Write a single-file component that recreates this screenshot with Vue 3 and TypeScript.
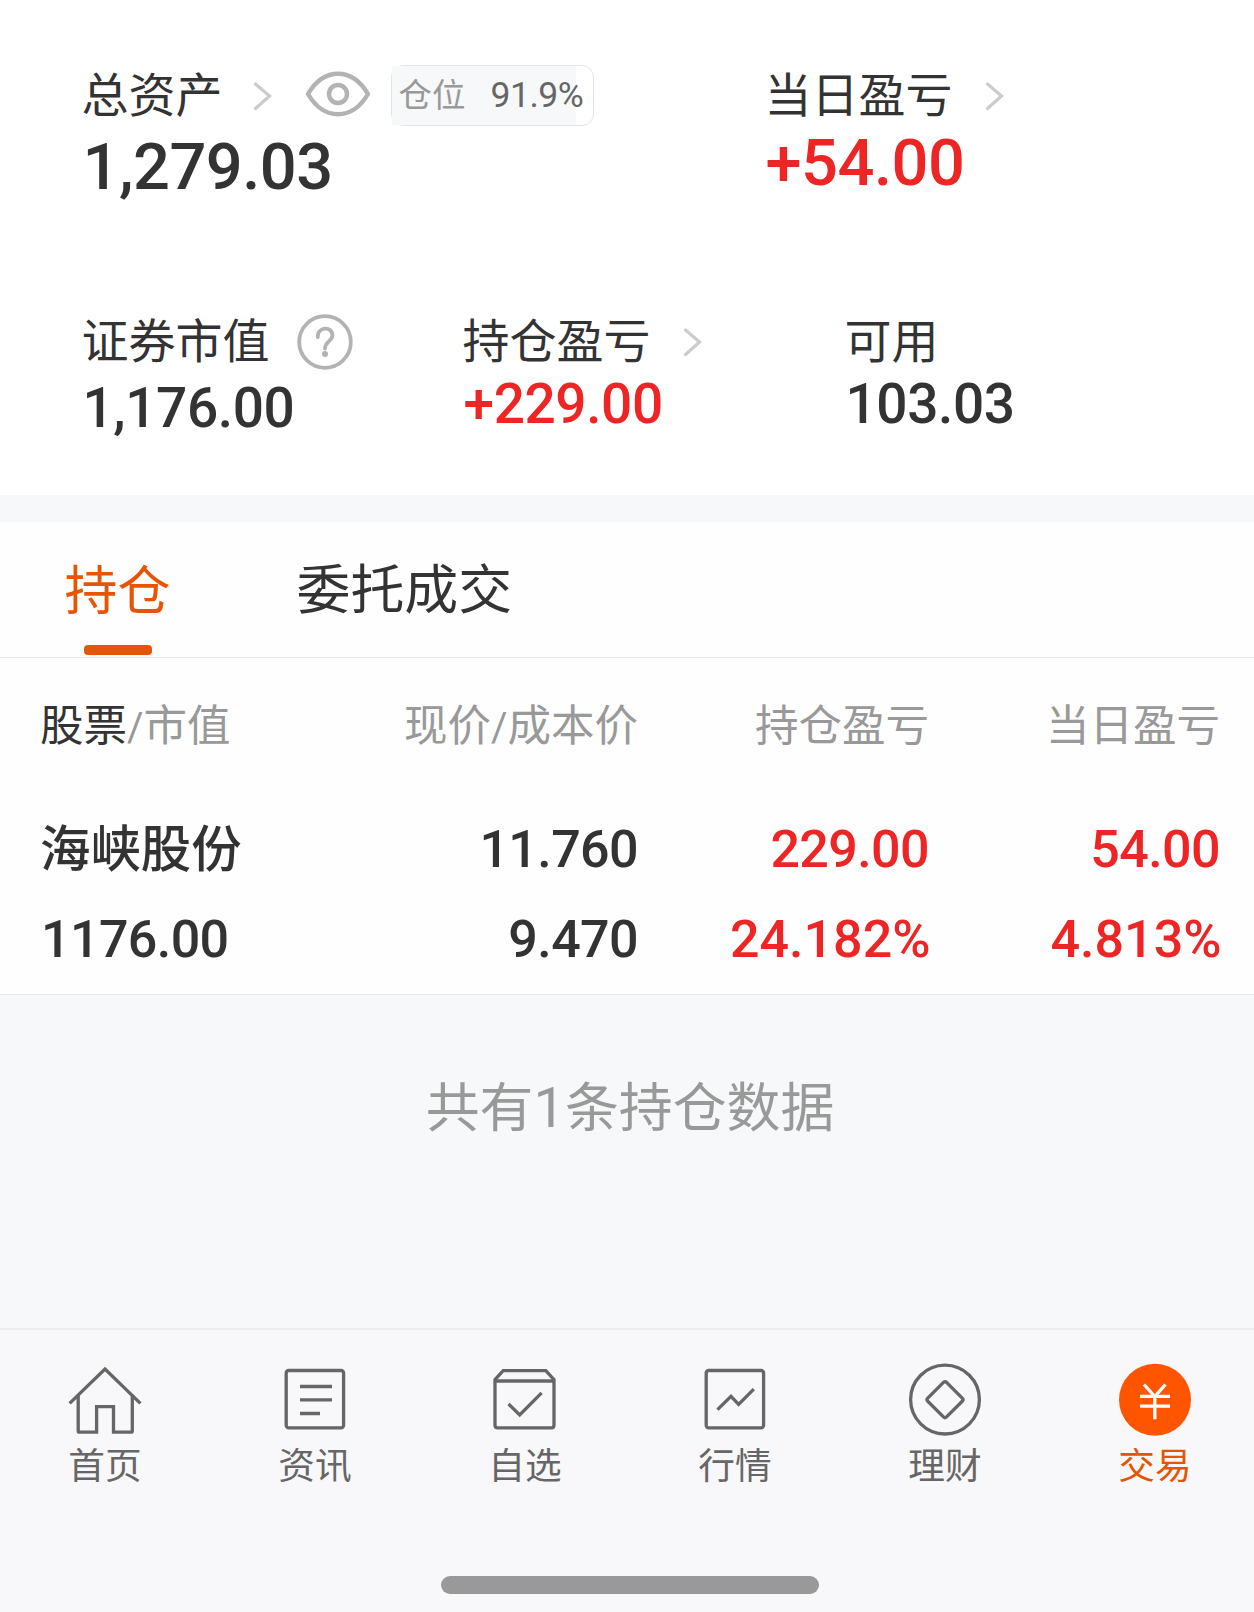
<script setup lang="ts">
interface Holding {
  name: string
  marketValue: string
  price: string
  cost: string
  profit: string
  profitRate: string
  dayProfit: string
  dayRate: string
}

interface NavItem {
  id: string
  label: string
}

const holdings: Holding[] = [
  {
    name: '海峡股份',
    marketValue: '1176.00',
    price: '11.760',
    cost: '9.470',
    profit: '229.00',
    profitRate: '24.182%',
    dayProfit: '54.00',
    dayRate: '4.813%',
  },
]

const navItems: NavItem[] = [
  { id: 'home', label: '首页' },
  { id: 'news', label: '资讯' },
  { id: 'watch', label: '自选' },
  { id: 'market', label: '行情' },
  { id: 'wealth', label: '理财' },
  { id: 'trade', label: '交易' },
]

const activeNav = 'trade'
</script>

<template>
  <div class="page">
    <section class="summary">
      <div class="row row-top">
        <div class="cell cell-total">
          <div class="label">
            <span class="label-text">总资产</span>
            <svg class="chevron chev-total" viewBox="0 0 20 30"><path d="M2.5 3 L16.5 15 L2.5 27.5" /></svg>
            <svg class="eye" viewBox="0 0 66 46">
              <path d="M3 23 C19 -4 47 -4 63 23 C47 50 19 50 3 23 Z" />
              <circle cx="33" cy="23" r="9" />
            </svg>
            <span class="pill"><span class="pill-bg"><span class="pill-name">仓位</span><span class="pill-num">91.9%</span></span></span>
          </div>
          <div class="value big">1,279.03</div>
        </div>
        <div class="cell">
          <div class="label">
            <span class="label-text">当日盈亏</span>
            <svg class="chevron" viewBox="0 0 20 30"><path d="M2.5 3 L16.5 15 L2.5 27.5" /></svg>
          </div>
          <div class="value big up">+54.00</div>
        </div>
      </div>
      <div class="row row-bottom">
        <div class="cell cell-market">
          <div class="label">
            <span class="label-text">证券市值</span>
            <svg class="help" viewBox="0 0 56 56">
              <circle cx="28" cy="28" r="25.8" />
              <path d="M20.8 23 C20.6 12 35.6 12 35.4 21.5 C35.3 27 28 27.5 28 34.5" />
              <circle class="dot" cx="28" cy="40" r="3" />
            </svg>
          </div>
          <div class="value">1,176.00</div>
        </div>
        <div class="cell cell-profit">
          <div class="label">
            <span class="label-text">持仓盈亏</span>
            <svg class="chevron" viewBox="0 0 20 30"><path d="M2.5 3 L16.5 15 L2.5 27.5" /></svg>
          </div>
          <div class="value up">+229.00</div>
        </div>
        <div class="cell">
          <div class="label"><span class="label-text">可用</span></div>
          <div class="value raised">103.03</div>
        </div>
      </div>
    </section>

    <div class="band"></div>

    <div class="tabs">
      <div class="tab active"><span>持仓</span><i class="bar"></i></div>
      <div class="tab"><span>委托成交</span></div>
    </div>

    <section class="table">
      <div class="grid head">
        <span class="first"><b>股票</b><i class="slash">/</i>市值</span>
        <span>现价<i class="slash">/</i>成本价</span>
        <span>持仓盈亏</span>
        <span>当日盈亏</span>
      </div>
      <template v-for="h in holdings" :key="h.name">
        <div class="grid line">
          <span class="first name">{{ h.name }}</span>
          <span>{{ h.price }}</span>
          <span class="up">{{ h.profit }}</span>
          <span class="up">{{ h.dayProfit }}</span>
        </div>
        <div class="grid line">
          <span class="first amount">{{ h.marketValue }}</span>
          <span>{{ h.cost }}</span>
          <span class="up pct">{{ h.profitRate }}</span>
          <span class="up pct">{{ h.dayRate }}</span>
        </div>
      </template>
    </section>

    <div class="count">共有<i class="count-num">{{ holdings.length }}</i>条持仓数据</div>

    <nav class="nav">
      <div v-for="n in navItems" :key="n.id" class="nav-item" :class="{ on: n.id === activeNav }">
        <svg class="nav-icon" viewBox="0 0 72 72">
          <template v-if="n.id === 'home'">
            <path d="M0.6 39.4 L36 5 L71.4 39.4" />
            <path d="M9.2 31.5 V67 Q9.2 68.2 10.4 68.2 H27.6 V42.6 H44.5 V68.2 H62 Q63.3 68.2 63.3 67 V31.5" />
          </template>
          <template v-else-if="n.id === 'news'">
            <rect x="7.2" y="6.5" width="57.4" height="57.3" rx="2.5" />
            <path d="M21 22.5 H53 M21 35.9 H53 M21 49.5 H41" />
          </template>
          <template v-else-if="n.id === 'watch'">
            <path d="M6 15.6 L14.2 6.6 H56.8 L65 15.6 V61 Q65 63.9 62.2 63.9 H8.8 Q6 63.9 6 61 Z" />
            <path d="M6 17 H65 M19.5 40 L30.7 51 L52.6 28.8" />
          </template>
          <template v-else-if="n.id === 'market'">
            <rect x="7.2" y="6.5" width="57.4" height="57.3" rx="2.5" />
            <path d="M18.5 45.6 L32 32.4 L39.6 40.4 L54.8 25.2" />
          </template>
          <template v-else-if="n.id === 'wealth'">
            <circle cx="36" cy="35.6" r="34.4" />
            <rect x="22.7" y="22.4" width="26.6" height="26.6" rx="2.2" transform="rotate(45 36 35.7)" />
          </template>
          <template v-else>
            <circle class="disc" cx="36" cy="35.7" r="36" />
            <path class="yen" d="M25 20.5 L35.8 32.6 L46.4 20.5 M21 32.3 H51 M21 42.2 H51 M35.8 32 V55.2" />
          </template>
        </svg>
        <span>{{ n.label }}</span>
      </div>
    </nav>
    <div class="home-indicator"></div>
  </div>
</template>

<style>
body {
  margin: 0;
  background: #f8f8fa;
}
</style>

<style scoped>
.page {
  width: 1254px;
  height: 1612px;
  overflow: hidden;
  display: flex;
  flex-direction: column;
  background: #f8f8fa;
  color: #333;
  font-family: 'Noto Sans CJK SC', sans-serif;
  white-space: nowrap;
}

.page > * {
  flex: none;
}

.up {
  color: #ee2525;
}

/* account summary */
.summary {
  box-sizing: border-box;
  height: 495px;
  padding: 60px 0 0 81.5px;
  background: #fff;
}

.row {
  display: flex;
  align-items: flex-start;
}

.row-top {
  height: 246px;
}

.cell-total {
  width: 683px;
}

.cell-market {
  width: 381px;
}

.cell-profit {
  width: 382px;
}

.label {
  display: flex;
  align-items: center;
  height: 62px;
  font-size: 47px;
  line-height: 62px;
}

.label-text {
  padding-top: 1px;
}

.chevron {
  width: 20px;
  height: 30px;
  margin: 10px 0 0 32px;
  fill: none;
  stroke: #ccc;
  stroke-width: 3.2;
  stroke-linecap: round;
}

.chev-total {
  margin-left: 30px;
}

.eye {
  width: 66px;
  height: 46px;
  margin: 5px 0 0 32px;
  fill: none;
  stroke: #b3b3b3;
  stroke-width: 4.4;
  stroke-linejoin: round;
}

.pill {
  box-sizing: border-box;
  width: 203px;
  height: 61px;
  margin: 9px 0 0 20px;
  border: 1px solid #e4e4e6;
  border-radius: 12px;
}

.pill-bg {
  display: flex;
  width: 184px;
  height: 59px;
  background: #f7f8fa;
}

.pill-name {
  flex: none;
  width: 99px;
  padding-left: 7px;
  box-sizing: border-box;
  font-size: 33.5px;
  line-height: 53px;
  color: #999;
}

.pill-num {
  font-family: Roboto, sans-serif;
  font-size: 35.5px;
  letter-spacing: -0.5px;
  line-height: 58px;
  color: #666;
}

.help {
  width: 56px;
  height: 56px;
  margin: 10px 0 0 27.5px;
  fill: none;
  stroke: #b3b3b3;
  stroke-width: 3.8;
  stroke-linecap: round;
}

.help .dot {
  fill: #b3b3b3;
  stroke: none;
}

.value {
  padding-left: 1px;
  font-family: Roboto, sans-serif;
  font-size: 55px;
  letter-spacing: -0.4px;
  line-height: 81px;
  font-weight: 500;
}

.value.up,
.value.raised {
  line-height: 73px;
}

.value.big {
  font-size: 65px;
  letter-spacing: -0.5px;
  line-height: 91px;
}

.value.big.up {
  line-height: 83px;
}

.band {
  height: 27px;
  background: #f6f8fa;
}

/* tabs */
.tabs {
  box-sizing: border-box;
  display: flex;
  gap: 126px;
  height: 136px;
  padding: 31px 0 0 64.5px;
  border-bottom: 1px solid #e6e7e8;
  background: #fefefe;
  font-size: 53.9px;
  line-height: 65px;
}

.tab {
  display: flex;
  flex-direction: column;
  align-items: center;
}

.tab.active {
  color: #e65505;
  font-size: 53px;
  line-height: 68px;
}

.bar {
  width: 68px;
  height: 10px;
  margin-top: 24px;
  border-radius: 4px;
  background: #e65505;
}

/* holdings */
.table {
  box-sizing: border-box;
  height: 337px;
  padding: 29px 0 0 40px;
  border-bottom: 1px solid #e8e9ea;
  background: #fefefe;
}

.grid {
  display: grid;
  grid-template-columns: 260px 338px 291px 291px;
  text-align: right;
}

.first {
  text-align: left;
}

.head {
  height: 72px;
  margin-bottom: 41px;
  font-size: 43.5px;
  line-height: 71px;
  color: #999;
}

.head b {
  font-weight: 400;
  color: #333;
}

.slash {
  font-family: Roboto, sans-serif;
  font-size: 40px;
  line-height: 1;
  font-style: normal;
}

.line {
  height: 90px;
  font-family: Roboto, sans-serif;
  font-size: 52px;
  letter-spacing: -0.6px;
  line-height: 100px;
  font-weight: 500;
}

.name {
  font-family: 'Noto Sans CJK SC', sans-serif;
  font-size: 50.4px;
  letter-spacing: 0;
  line-height: 92px;
}

.amount {
  padding-left: 1px;
}

.pct {
  margin-right: -1.5px;
  letter-spacing: 0;
}

.count {
  box-sizing: border-box;
  height: 333px;
  padding: 72px 0 0 6px;
  background: #f6f8fa;
  text-align: center;
  font-size: 53.9px;
  line-height: 73px;
  color: #999;
}

.count-num {
  font-family: Roboto, sans-serif;
  font-size: 56px;
  line-height: 1;
  font-style: normal;
}

/* bottom navigation */
.nav {
  box-sizing: border-box;
  display: flex;
  width: 1260px;
  height: 248px;
  padding-top: 33.5px;
  border-top: 2px solid #ebecee;
  color: #666;
}

.nav-item {
  display: flex;
  flex-direction: column;
  align-items: center;
  width: 210px;
  font-size: 36.7px;
  line-height: 50px;
}

.nav-item.on {
  color: #e65505;
}

.nav-icon {
  width: 72px;
  height: 72px;
  margin-bottom: 2px;
  overflow: visible;
  fill: none;
  stroke: #666;
  stroke-width: 3.3;
}

.nav-icon .disc {
  fill: #ff5500;
  stroke: none;
}

.nav-icon .yen {
  stroke: #fff;
}

.home-indicator {
  width: 378px;
  height: 18px;
  margin-left: 441px;
  border-radius: 9px;
  background: #999;
}
</style>
